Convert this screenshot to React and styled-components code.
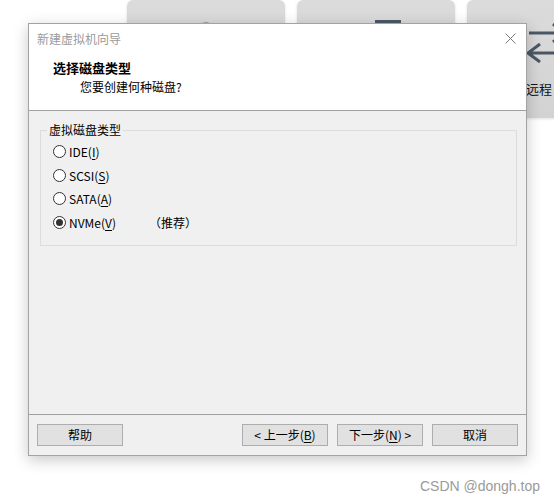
import React from "react";
import styled, { createGlobalStyle } from "styled-components";

const Global = createGlobalStyle`
  html, body { margin: 0; padding: 0; background: #fff; overflow: hidden; }
  body { font-family: "Noto Sans CJK SC", "Noto Sans", sans-serif; font-size: 12px; color: #000; }
  #root { width: 554px; height: 504px; }
`;

const Desktop = styled.div`
  position: relative;
  width: 554px;
  height: 504px;
  overflow: hidden;
  background: #fff;
`;

const TileRow = styled.div`
  display: flex;
  gap: 12px;
  padding-left: 127px;
`;

const Tile = styled.div`
  flex: 0 0 158px;
  height: 118px;
  box-sizing: border-box;
  border-radius: 6px;
  background: linear-gradient(#dbdbdb, #d3d3d3);
  box-shadow: 0 1px 3px rgba(0, 0, 0, 0.12);
  display: flex;
  flex-direction: column;
  align-items: ${(p) => (p.$start ? "flex-start" : "center")};
  padding-top: ${(p) => p.$top}px;
  padding-left: ${(p) => p.$left || 0}px;
`;

const TileLabel = styled.span`
  font-size: 13px;
  color: #111;
  margin-top: 15px;
  white-space: nowrap;
`;

const Window = styled.div`
  position: absolute;
  left: 28px;
  top: 23px;
  width: 499px;
  height: 433px;
  box-sizing: border-box;
  border: 1px solid #a3a3a3;
  background: #f0f0f0;
  box-shadow: 0 4px 14px rgba(0, 0, 0, 0.22);
  display: flex;
  flex-direction: column;
`;

const Top = styled.div`
  height: 86px;
  background: #fff;
  border-bottom: 1px solid #a0a0a0;
  display: flex;
  flex-direction: column;
`;

const TitleBar = styled.div`
  height: 28px;
  display: flex;
  align-items: center;
  justify-content: space-between;
  padding: 0 10px 0 8px;
`;

const Title = styled.span`
  color: #9a9a9a;
  font-size: 12px;
`;

const Close = styled.svg`
  width: 11px;
  height: 11px;
`;

const Heading = styled.div`
  font-weight: bold;
  font-size: 13px;
  line-height: 18px;
  padding-left: 24px;
  margin-top: 7px;
`;

const Sub = styled.div`
  font-size: 12px;
  line-height: 18px;
  padding-left: 51px;
  margin-top: 1px;
`;

const Body = styled.div`
  height: 304px;
  box-sizing: border-box;
  padding: 12px 9px 0 11px;
  border-bottom: 1px solid #a0a0a0;
`;

const Group = styled.fieldset`
  margin: 0;
  height: 123px;
  box-sizing: border-box;
  border: 1px solid #dcdcdc;
  padding: 3px 0 0 12px;
  display: flex;
  flex-direction: column;
`;

const Legend = styled.legend`
  padding: 0 2px;
  margin-left: -6px;
  font-size: 12px;
  line-height: 14px;
`;

const Row = styled.label`
  height: 23.5px;
  display: grid;
  grid-template-columns: 13px 77px auto;
  column-gap: 3px;
  align-items: center;
  font-size: 12px;
`;

const Circle = styled.span`
  width: 13px;
  height: 13px;
  box-sizing: border-box;
  border: 1px solid #333;
  border-radius: 50%;
  background: #fff;
  display: flex;
  align-items: center;
  justify-content: center;
  &::after {
    content: "";
    width: 7px;
    height: 7px;
    border-radius: 50%;
    background: ${(p) => (p.$on ? "#333" : "transparent")};
  }
`;

const Footer = styled.div`
  flex: 1;
  display: flex;
  align-items: flex-start;
  padding: 9px 8px 0 8px;
  gap: 9px;
`;

const Button = styled.button`
  width: 86px;
  height: 22px;
  box-sizing: border-box;
  border: 1px solid #adadad;
  background: #e1e1e1;
  font-family: inherit;
  font-size: 12px;
  color: #000;
  padding: 0;
  line-height: 18px;
  margin-left: ${(p) => (p.$push ? "auto" : "0")};
`;

const U = styled.span`
  text-decoration: underline;
  text-underline-offset: 2px;
`;

const Watermark = styled.div`
  position: absolute;
  right: 14px;
  top: 478px;
  font-family: "Liberation Sans", Arial, sans-serif;
  font-size: 14px;
  color: #9a9a9a;
`;

const options = [
  { name: "IDE", key: "I" },
  { name: "SCSI", key: "S" },
  { name: "SATA", key: "A" },
  { name: "NVMe", key: "V", on: true, note: "（推荐）" },
];

export default function App() {
  return (
    <>
      <Global />
      <Desktop>
        <TileRow>
          <Tile $top={22}>
            <svg width="26" height="26" viewBox="0 0 26 26">
              <circle cx="13" cy="13" r="11" fill="none" stroke="#4a5866" strokeWidth="3" />
            </svg>
          </Tile>
          <Tile $top={20} $start $left={78}>
            <svg width="26" height="26" viewBox="0 0 26 26">
              <rect x="1.5" y="1.5" width="23" height="23" fill="none" stroke="#4a5866" strokeWidth="3" />
            </svg>
          </Tile>
          <Tile $top={22} $start $left={59}>
            <svg width="40" height="42" viewBox="0 0 40 42">
              <path d="M3 11H38M27 2L38 11L27 20" fill="none" stroke="#4a5866" strokeWidth="3" />
              <path d="M2 31H40M14 22L2 31L14 40" fill="none" stroke="#4a5866" strokeWidth="3" />
            </svg>
            <TileLabel>远程</TileLabel>
          </Tile>
        </TileRow>

        <Window>
          <Top>
            <TitleBar>
              <Title>新建虚拟机向导</Title>
              <Close viewBox="0 0 11 11">
                <path d="M0.5 0.5L10.5 10.5M10.5 0.5L0.5 10.5" stroke="#7a7a7a" strokeWidth="1" />
              </Close>
            </TitleBar>
            <Heading>选择磁盘类型</Heading>
            <Sub>您要创建何种磁盘?</Sub>
          </Top>
          <Body>
            <Group>
              <Legend>虚拟磁盘类型</Legend>
              {options.map((o) => (
                <Row key={o.name}>
                  <Circle $on={o.on} />
                  <span>
                    {o.name}(<U>{o.key}</U>)
                  </span>
                  <span>{o.note}</span>
                </Row>
              ))}
            </Group>
          </Body>
          <Footer>
            <Button>帮助</Button>
            <Button $push>&lt; 上一步(<U>B</U>)</Button>
            <Button>下一步(<U>N</U>) &gt;</Button>
            <Button>取消</Button>
          </Footer>
        </Window>
        <Watermark>CSDN @dongh.top</Watermark>
      </Desktop>
    </>
  );
}
